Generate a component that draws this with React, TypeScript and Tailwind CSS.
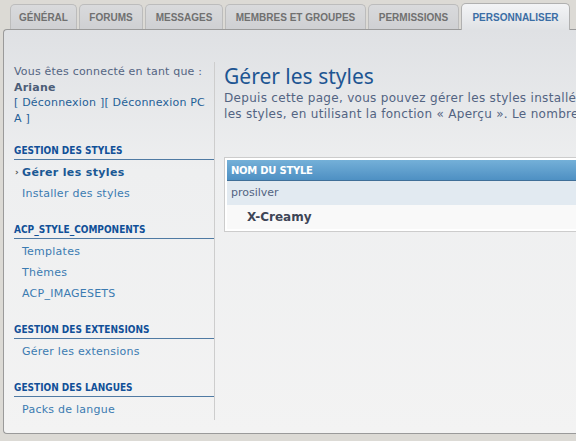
import React from "react";

const tabs = [
  { label: "GÉNÉRAL", w: "w-[67px]" },
  { label: "FORUMS", w: "w-[64px]" },
  { label: "MESSAGES", w: "w-[78px]" },
  { label: "MEMBRES ET GROUPES", w: "w-[141px]" },
  { label: "PERMISSIONS", w: "w-[91px]" },
];

function MenuHeading({ children, first }: { children: React.ReactNode; first?: boolean }) {
  return (
    <div
      className={`${first ? "mt-[19px]" : "mt-[20px]"} h-[15px] pb-[2px] border-b border-[#4f7aa3] text-[10px] leading-[12px] font-bold text-[#115098] whitespace-nowrap`}
      style={{ fontFamily: '"DejaVu Sans Condensed", "DejaVu Sans", Tahoma, sans-serif' }}
    >
      {children}
    </div>
  );
}

function MenuItem({ children, active, first }: { children: React.ReactNode; active?: boolean; first?: boolean }) {
  return (
    <div className={`${first ? "mt-[2px]" : ""} h-[21px] flex items-center relative`}>
      {active && (
        <span className="absolute left-[1px] top-[6px] text-[9px] leading-[9px] text-[#555] font-bold">›</span>
      )}
      <span
        className={`pl-[8px] text-[11px] leading-[13px] whitespace-nowrap ${
          active ? "font-bold tracking-[0.35px] text-[#1a5894]" : "tracking-[0.25px] text-[#3b7bb1]"
        }`}
      >
        {children}
      </span>
    </div>
  );
}

export default function App() {
  return (
    <div
      className="w-[576px] h-[441px] overflow-hidden bg-[#dcdad5] flex flex-col"
      style={{ fontFamily: '"DejaVu Sans", Verdana, sans-serif' }}
    >
      <div className="flex items-end gap-[2px] pl-[10px] pt-[3px] h-[29px] shrink-0">
        {tabs.map((t) => (
          <div
            key={t.label}
            className={`${t.w} h-[25px] shrink-0 flex items-center justify-center rounded-t-[5px] border border-b-0 border-[#bcbcbc] bg-gradient-to-b from-[#d9dadc] to-[#cfd0d3] text-[10px] font-bold text-[#707070]`}
            style={{ fontFamily: '"Liberation Sans", Arial, sans-serif' }}
          >
            {t.label}
          </div>
        ))}
        <div
          className="w-[109px] h-[27px] -mb-[1px] relative z-10 shrink-0 flex items-center justify-center rounded-t-[5px] border border-b-0 border-[#b0b0b0] bg-gradient-to-b from-[#f3f4f6] to-[#e0e2e5] text-[10px] font-bold text-[#3b6ea5]"
          style={{ fontFamily: '"Liberation Sans", Arial, sans-serif' }}
        >
          PERSONNALISER
        </div>
      </div>

      <div className="ml-[3px] w-[640px] h-[405px] shrink-0 border border-r-0 border-[#9a9a9a] rounded-tl-[4px] rounded-bl-[4px] bg-gradient-to-b from-[#dfe1e4] via-[#eeeff0] via-[35%] to-[#f3f3f3] pl-[10px] pt-[32px] flex">
        {/* left menu */}
        <div className="w-[201px] h-[358px] shrink-0 border-r border-[#cdcdcd]">
          <div className="pt-[2px] text-[11px] leading-[15.5px] tracking-[0.2px] text-[#536482] whitespace-nowrap">
            <div>Vous êtes connecté en tant que :</div>
            <div className="font-bold text-[#4c5d77]">Ariane</div>
            <div className="text-[#1f5f97]">[ Déconnexion ][ Déconnexion PC</div>
            <div className="text-[#1f5f97]">A ]</div>
          </div>

          <MenuHeading first>GESTION DES STYLES</MenuHeading>
          <MenuItem first active>Gérer les styles</MenuItem>
          <MenuItem>Installer des styles</MenuItem>

          <MenuHeading>ACP_STYLE_COMPONENTS</MenuHeading>
          <MenuItem first>Templates</MenuItem>
          <MenuItem>Thèmes</MenuItem>
          <MenuItem>ACP_IMAGESETS</MenuItem>

          <MenuHeading>GESTION DES EXTENSIONS</MenuHeading>
          <MenuItem first>Gérer les extensions</MenuItem>

          <MenuHeading>GESTION DES LANGUES</MenuHeading>
          <MenuItem first>Packs de langue</MenuItem>
        </div>

        {/* main content */}
        <div className="pl-[9px] pt-[1px] flex-1 min-w-0">
          <h1
            className="text-[21px] leading-[26px] text-[#1d5592] whitespace-nowrap"
            style={{ fontFamily: '"Noto Sans", "Open Sans", sans-serif' }}
          >
            Gérer les styles
          </h1>
          <div className="mt-[1px] w-[352px] overflow-hidden text-[12px] leading-[16px] tracking-[0.3px] text-[#536482] whitespace-nowrap">
            <div>Depuis cette page, vous pouvez gérer les styles installé</div>
            <div>les styles, en utilisant la fonction « Aperçu ». Le nombre</div>
          </div>

          <div className="mt-[35px] w-[420px] border border-[#cccccc] bg-white p-[2px]">
            <div className="h-[21px] flex items-center pl-[4px] bg-gradient-to-b from-[#74b0d8] to-[#4e90c3] border-b border-[#3f6f98] text-[10px] font-bold tracking-[-0.25px] text-white">
              NOM DU STYLE
            </div>
            <div className="h-[24px] flex items-center pl-[4px] bg-[#e2eaf1] text-[11px] text-[#536482]">
              prosilver
            </div>
            <div className="h-[24px] flex items-center pl-[20px] bg-[#f9f9f9] text-[12px] font-bold text-[#3d4556]">
              X-Creamy
            </div>
          </div>
        </div>
      </div>
    </div>
  );
}
